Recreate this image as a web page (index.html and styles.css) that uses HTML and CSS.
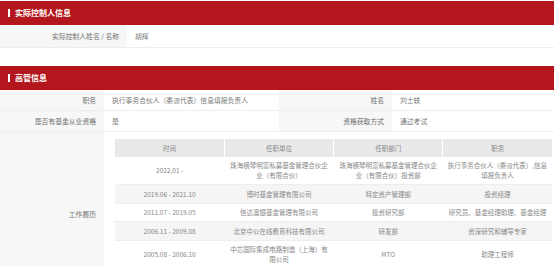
FILE: index.html
```html
<!DOCTYPE html>
<html lang="zh-CN">
<head>
<meta charset="utf-8">
<title>基金管理人信息</title>
<link rel="stylesheet" href="styles.css">
</head>
<body>
<div class="page">
  <section class="section">
    <h2 class="section-title">实际控制人信息</h2>
    <table class="info info-one">
      <colgroup><col class="c-l1"><col></colgroup>
      <tr>
        <td class="label">实际控制人姓名 / 名称</td>
        <td class="value">胡辉</td>
      </tr>
    </table>
  </section>

  <section class="section">
    <h2 class="section-title">高管信息</h2>
    <table class="info info-four">
      <colgroup><col class="c-a"><col class="c-b"><col class="c-c"><col class="c-d"></colgroup>
      <tr>
        <td class="label">职务</td>
        <td class="value">执行事务合伙人（委派代表）信息填报负责人</td>
        <td class="label">姓名</td>
        <td class="value">刘士轶</td>
      </tr>
      <tr>
        <td class="label">是否有基金从业资格</td>
        <td class="value">是</td>
        <td class="label">资格获取方式</td>
        <td class="value">通过考试</td>
      </tr>
      <tr>
        <td class="label">工作履历</td>
        <td class="value nest-cell" colspan="3">
          <table class="resume">
            <thead>
              <tr><th>时间</th><th>任职单位</th><th>任职部门</th><th>职务</th></tr>
            </thead>
            <tbody>
              <tr><td>2022.01 -</td><td>珠海横琴明富私募基金管理合伙企业（有限合伙）</td><td>珠海横琴明富私募基金管理合伙企业（有限合伙）投资部</td><td>执行事务合伙人（委派代表）,信息填报负责人</td></tr>
              <tr><td>2019.06 - 2021.10</td><td>博时基金管理有限公司</td><td>特定资产管理部</td><td>投资经理</td></tr>
              <tr><td>2011.07 - 2019.05</td><td>信达澳银基金管理有限公司</td><td>投资研究部</td><td>研究员、基金经理助理、基金经理</td></tr>
              <tr><td>2006.11 - 2009.08</td><td>北京中公在线教育科技有限公司</td><td>研发部</td><td>资深研究和辅导专家</td></tr>
              <tr><td>2005.08 - 2006.10</td><td>中芯国际集成电路制造（上海）有限公司</td><td>MTO</td><td>助理工程师</td></tr>
            </tbody>
          </table>
        </td>
      </tr>
    </table>
  </section>
</div>
</body>
</html>
```

FILE: styles.css
```css
html, body {
  margin: 0;
  padding: 0;
  background: #fff;
}

body {
  font-family: "Noto Sans CJK SC", "Noto Sans", sans-serif;
  color: #777;
}

.page {
  padding-top: 1px;
}

.section + .section {
  margin-top: 18px;
}

.section-title {
  margin: 0;
  height: 24px;
  display: flex;
  align-items: center;
  gap: 5px;
  padding-left: 8px;
  background: #b3161c;
  color: #fff;
  font-size: 8px;
  font-weight: bold;
  line-height: 1;
}

.section-title::before {
  content: "";
  width: 2px;
  height: 8px;
  background: #fff;
}

.info {
  width: 100%;
  border-collapse: collapse;
  table-layout: fixed;
  font-size: 6.8px;
  line-height: 10px;
}

.info td {
  padding: 5px 8px;
  border-bottom: 1px solid #eeeeee;
  vertical-align: middle;
}

.info-one td {
  padding: 6px 8px;
}

.c-l1 { width: 127px; }
.c-a { width: 104px; }
.c-b { width: 175px; }
.c-c { width: 113px; }
.c-d { width: 162px; }

.label {
  background: #f7f7f7;
  text-align: right;
  color: #6f6f6f;
}

.value {
  background: #fff;
  text-align: left;
  color: #777;
}

.info td.nest-cell {
  padding: 7px 2px 28px 11px;
  border-bottom: none;
}

.resume {
  width: 100%;
  border-collapse: collapse;
  table-layout: fixed;
  font-size: 6.5px;
  line-height: 10px;
  color: #888;
  text-align: center;
}

.resume th,
.resume td {
  padding: 3.75px 4px;
  font-weight: normal;
  vertical-align: middle;
}

.resume th {
  background: #e9e9e9;
  color: #888;
  border-right: 1px solid #fff;
}

.resume th:last-child {
  border-right: none;
}

.resume tbody tr:nth-child(even) td {
  background: #f5f5f5;
}
```
